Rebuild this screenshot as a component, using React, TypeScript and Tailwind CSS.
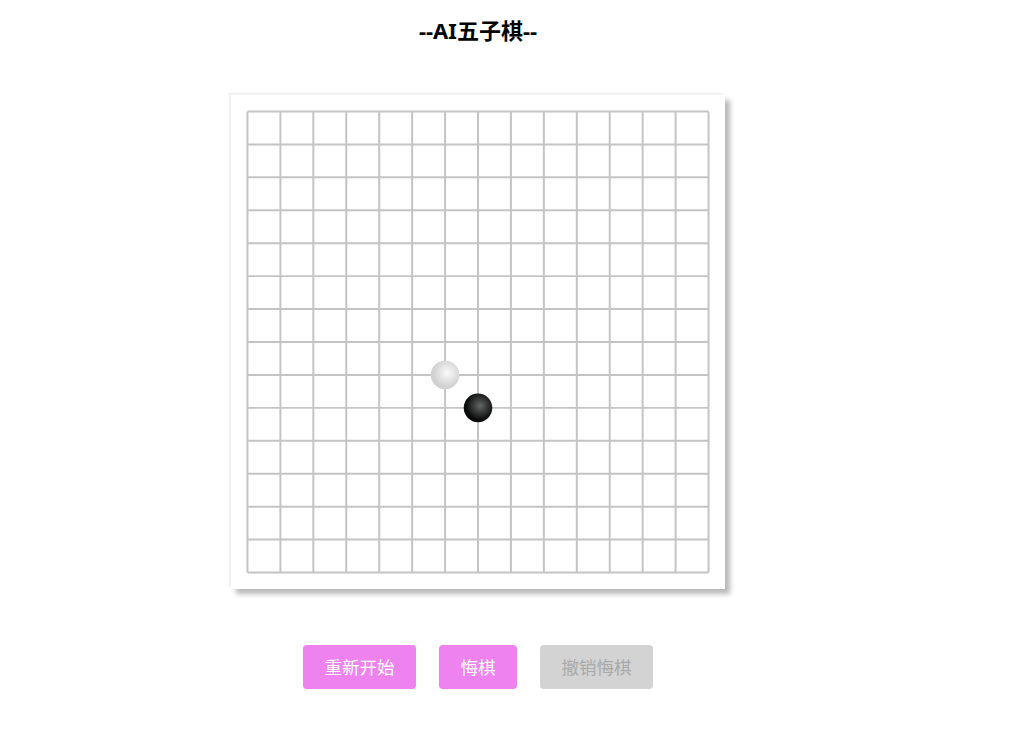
import React from "react"

const SIZE = 15
const stones: { x: number; y: number; black: boolean }[] = [
  { x: 6, y: 8, black: false },
  { x: 7, y: 9, black: true },
]

function Board() {
  const lines = Array.from({ length: SIZE }, (_, i) => 15 + i * 30)
  return (
    <svg viewBox="0 0 450 450" width={494} height={494} className="block">
      <defs>
        {stones.map((s, i) => {
          const cx = 15 + s.x * 30 + 2
          const cy = 15 + s.y * 30 - 2
          return (
            <radialGradient key={i} id={`stone-${i}`} gradientUnits="userSpaceOnUse" cx={cx} cy={cy} r={13} fx={cx} fy={cy}>
              <stop offset="0" stopColor={s.black ? "#636766" : "#F9F9F9"} />
              <stop offset="1" stopColor={s.black ? "#0A0A0A" : "#D1D1D1"} />
            </radialGradient>
          )
        })}
      </defs>
      {lines.map(p => (
        <g key={p}>
          <line x1={15} y1={p} x2={435} y2={p} stroke="#c4c4c4" strokeWidth={1.8} />
          <line x1={p} y1={15} x2={p} y2={435} stroke="#c4c4c4" strokeWidth={1.8} />
        </g>
      ))}
      {stones.map((s, i) => (
        <circle key={i} cx={15 + s.x * 30} cy={15 + s.y * 30} r={13} fill={`url(#stone-${i})`} />
      ))}
    </svg>
  )
}

export default function App() {
  return (
    <div className="min-h-screen bg-white" style={{ fontFamily: '"Noto Sans", "Noto Sans CJK SC", sans-serif' }}>
      <div className="w-[956px] flex flex-col items-center">
        <h1 className="mt-[15px] text-[22px] leading-[30px] font-bold text-black">--AI五子棋--</h1>

        {/* board */}
        <div className="mt-[50px] bg-white shadow-[-2px_-2px_2px_#efefef,5px_5px_5px_#b9b9b9]">
          <Board />
        </div>

        {/* controls */}
        <div className="mt-[56px] flex gap-[23px]">
          <button className="h-[44px] w-[113px] rounded-[4px] bg-[#ee82ee] text-white text-[17.5px]">重新开始</button>
          <button className="h-[44px] w-[78px] rounded-[4px] bg-[#ee82ee] text-white text-[17.5px]">悔棋</button>
          <button className="h-[44px] w-[113px] rounded-[4px] bg-[#d3d3d3] text-[#a9a9a9] text-[17.5px] cursor-not-allowed">撤销悔棋</button>
        </div>
      </div>
    </div>
  )
}
